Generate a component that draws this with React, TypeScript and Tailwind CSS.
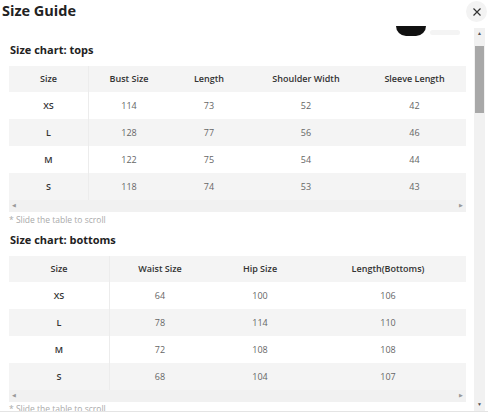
import React from 'react';

const font = { fontFamily: '"Open Sans", "Noto Sans", sans-serif' };

interface TableProps {
    cols: string;
    headers: string[];
    rows: (string | number)[][];
}

const SizeTable: React.FC<TableProps> = ({ cols, headers, rows }) => {
    return (
        <div className="w-[457px]">
            <div className={`grid ${cols} h-[26px] bg-[#f4f4f4] text-[9px] font-semibold text-[#333]`}>
                {headers.map((h, i) => (
                    <div key={h} className={`flex items-center justify-center ${i === 0 ? 'border-r border-[#ececec]' : ''}`}>{h}</div>
                ))}
            </div>
            {rows.map((r, ri) => (
                <div key={ri} className={`grid ${cols} h-[27px] text-[9px] ${ri % 2 === 1 ? 'bg-[#f4f4f4]' : 'bg-white'}`}>
                    {r.map((c, i) => (
                        <div
                            key={i}
                            className={`flex items-center justify-center ${i === 0 ? 'font-semibold text-[#333] border-r border-[#ececec]' : 'text-[#666]'}`}
                        >
                            {c}
                        </div>
                    ))}
                </div>
            ))}
            <div className="h-[12px] bg-[#f1f1f1] flex items-center justify-between px-[3px] text-[5px] text-[#999]">
                <span>◀</span>
                <span>▶</span>
            </div>
        </div>
    );
};

export default function App() {
    return (
        <div className="w-[488px] h-[415px] bg-white overflow-hidden relative" style={font}>
            <div className="h-[26px] flex items-start justify-between">
                <h1 className="text-[14.5px] font-bold text-[#222] pl-[2px] leading-[22px]">Size Guide</h1>
                <button className="mt-[1px] mr-[1px] h-[21px] w-[21px] rounded-full bg-[#f3f3f3] flex items-center justify-center text-[#333]">
                    <svg width="10" height="10" viewBox="0 0 10 10" fill="none" stroke="currentColor" strokeWidth="1.2">
                        <path d="M1.5 1.5 L8.5 8.5 M8.5 1.5 L1.5 8.5" />
                    </svg>
                </button>
            </div>

            <div className="flex h-[386px] border-b border-[#e4e4e4]">
                <div className="flex-1 overflow-hidden pl-[9px]">
                    <div className="h-[10px] flex items-end justify-end pr-[14px] gap-[4px] overflow-hidden">
                        <div className="w-[30px] h-[20px] rounded-full bg-[#111]" />
                        <div className="w-[30px] h-[5px] mb-[1px] rounded-full bg-[#f4f4f4]" />
                    </div>
                    <h2 className="mt-[7px] text-[11px] font-bold text-[#222] leading-[14px] pl-[1px]">Size chart: tops</h2>
                    <div className="mt-[9px]">
                        <SizeTable
                            cols="grid-cols-[80px_80px_80px_114px_103px]"
                            headers={['Size', 'Bust Size', 'Length', 'Shoulder Width', 'Sleeve Length']}
                            rows={[
                                ['XS', 114, 73, 52, 42],
                                ['L', 128, 77, 56, 46],
                                ['M', 122, 75, 54, 44],
                                ['S', 118, 74, 53, 43],
                            ]}
                        />
                    </div>
                    <p className="mt-[2px] text-[8.5px] text-[#aaa] leading-[12px]">* Slide the table to scroll</p>
                    <h2 className="mt-[7px] text-[11px] font-bold text-[#222] leading-[14px] pl-[1px]">Size chart: bottoms</h2>
                    <div className="mt-[9px]">
                        <SizeTable
                            cols="grid-cols-[101px_100px_100px_156px]"
                            headers={['Size', 'Waist Size', 'Hip Size', 'Length(Bottoms)']}
                            rows={[
                                ['XS', 64, 100, 106],
                                ['L', 78, 114, 110],
                                ['M', 72, 108, 108],
                                ['S', 68, 104, 107],
                            ]}
                        />
                    </div>
                    <p className="mt-[1px] text-[8.5px] text-[#aaa] leading-[12px]">* Slide the table to scroll</p>
                </div>
                <div className="w-[11px] mr-[3px] mt-[2px] bg-[#f1f1f1] flex flex-col items-center">
                    <div className="h-[12px] flex items-center text-[5px] text-[#555]">▲</div>
                    <div className="mt-[6px] w-[9px] h-[67px] bg-[#a8a8a8]" />
                    <div className="flex-1" />
                    <div className="h-[12px] flex items-center text-[5px] text-[#555]">▼</div>
                </div>
            </div>
        </div>
    );
}
